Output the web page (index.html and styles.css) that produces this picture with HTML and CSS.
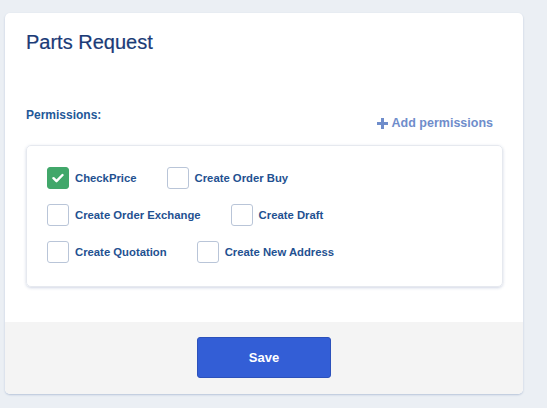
FILE: index.html
```html
<!DOCTYPE html>
<html>
<head>
<meta charset="utf-8">
<link rel="stylesheet" href="styles.css">
</head>
<body>
<div class="page">
  <div class="card">
    <div class="card-body">
      <h1 class="title">Parts Request</h1>
      <div class="perm-head">
        <div class="perm-label">Permissions:</div>
        <a class="add-link"><span class="plus">
          <svg width="11" height="11" viewBox="0 0 11 11"><path d="M4 0h3v4h4v3H7v4H4V7H0V4h4z" fill="#6f8dcb"/></svg>
        </span>Add permissions</a>
      </div>
      <div class="perm-box">
        <div class="perm-row">
          <label class="item"><span class="box checked"><svg width="12" height="10" viewBox="0 0 12 10"><path d="M1.5 5.2l3 3 6-6.2" fill="none" stroke="#fff" stroke-width="2.4" stroke-linecap="round" stroke-linejoin="round"/></svg></span><span class="lbl">CheckPrice</span></label>
          <label class="item"><span class="box"></span><span class="lbl">Create Order Buy</span></label>
        </div>
        <div class="perm-row">
          <label class="item"><span class="box"></span><span class="lbl">Create Order Exchange</span></label>
          <label class="item"><span class="box"></span><span class="lbl">Create Draft</span></label>
        </div>
        <div class="perm-row">
          <label class="item"><span class="box"></span><span class="lbl">Create Quotation</span></label>
          <label class="item"><span class="box"></span><span class="lbl">Create New Address</span></label>
        </div>
      </div>
    </div>
    <div class="card-footer">
      <button class="save">Save</button>
    </div>
  </div>
</div>
</body>
</html>
```
FILE: styles.css
```css
html, body {
  margin: 0;
  padding: 0;
  background: #ebeff4;
  font-family: "Liberation Sans", Arial, sans-serif;
}
.page {
  padding: 13px 24px 14px 5px;
}
.card {
  width: 518px;
  background: #fff;
  border-radius: 5px;
  box-shadow: 0 1px 2px rgba(120, 145, 185, 0.45);
  overflow: hidden;
}
.card-body {
  padding: 17px 20px 35px 21px;
}
.title {
  margin: 0;
  font-size: 20px;
  line-height: 24px;
  font-weight: normal;
  color: #1a3b77;
  -webkit-text-stroke: 0.2px #1a3b77;
}
.perm-head {
  margin-top: 53px;
  display: flex;
  justify-content: space-between;
  align-items: flex-start;
}
.perm-label {
  font-size: 12px;
  line-height: 16px;
  font-weight: bold;
  color: #1f5898;
}
.add-link {
  margin-top: 8px;
  margin-right: 10px;
  display: flex;
  align-items: center;
  gap: 4px;
  font-size: 12.5px;
  line-height: 16px;
  font-weight: bold;
  color: #6f8dcb;
}
.plus {
  display: flex;
}
.perm-box {
  margin-top: 14px;
  border: 1px solid #e6e9ef;
  border-radius: 5px;
  box-shadow: 0 1px 3px rgba(150, 165, 195, 0.45);
  padding: 21px 20px 23px 20px;
  display: flex;
  flex-direction: column;
  gap: 15px;
}
.perm-row {
  display: flex;
  align-items: center;
}
.item {
  display: flex;
  align-items: center;
  margin-right: 30px;
}
.box {
  width: 20px;
  height: 20px;
  border: 1px solid #b9c5d8;
  border-radius: 3px;
  display: flex;
  align-items: center;
  justify-content: center;
  background: #fff;
}
.box.checked {
  background: #41a76a;
  border-color: #41a76a;
}
.lbl {
  margin-left: 6px;
  font-size: 11.3px;
  line-height: 14px;
  font-weight: bold;
  color: #1f5191;
}
.card-footer {
  background: #f4f4f4;
  padding: 15px 0 16px;
  display: flex;
  justify-content: center;
}
.save {
  width: 134px;
  height: 41px;
  background: #335ed6;
  border: 1px solid #2c51bb;
  border-radius: 3px;
  color: #fff;
  font-family: "Liberation Sans", Arial, sans-serif;
  font-size: 13px;
  font-weight: bold;
}
```
